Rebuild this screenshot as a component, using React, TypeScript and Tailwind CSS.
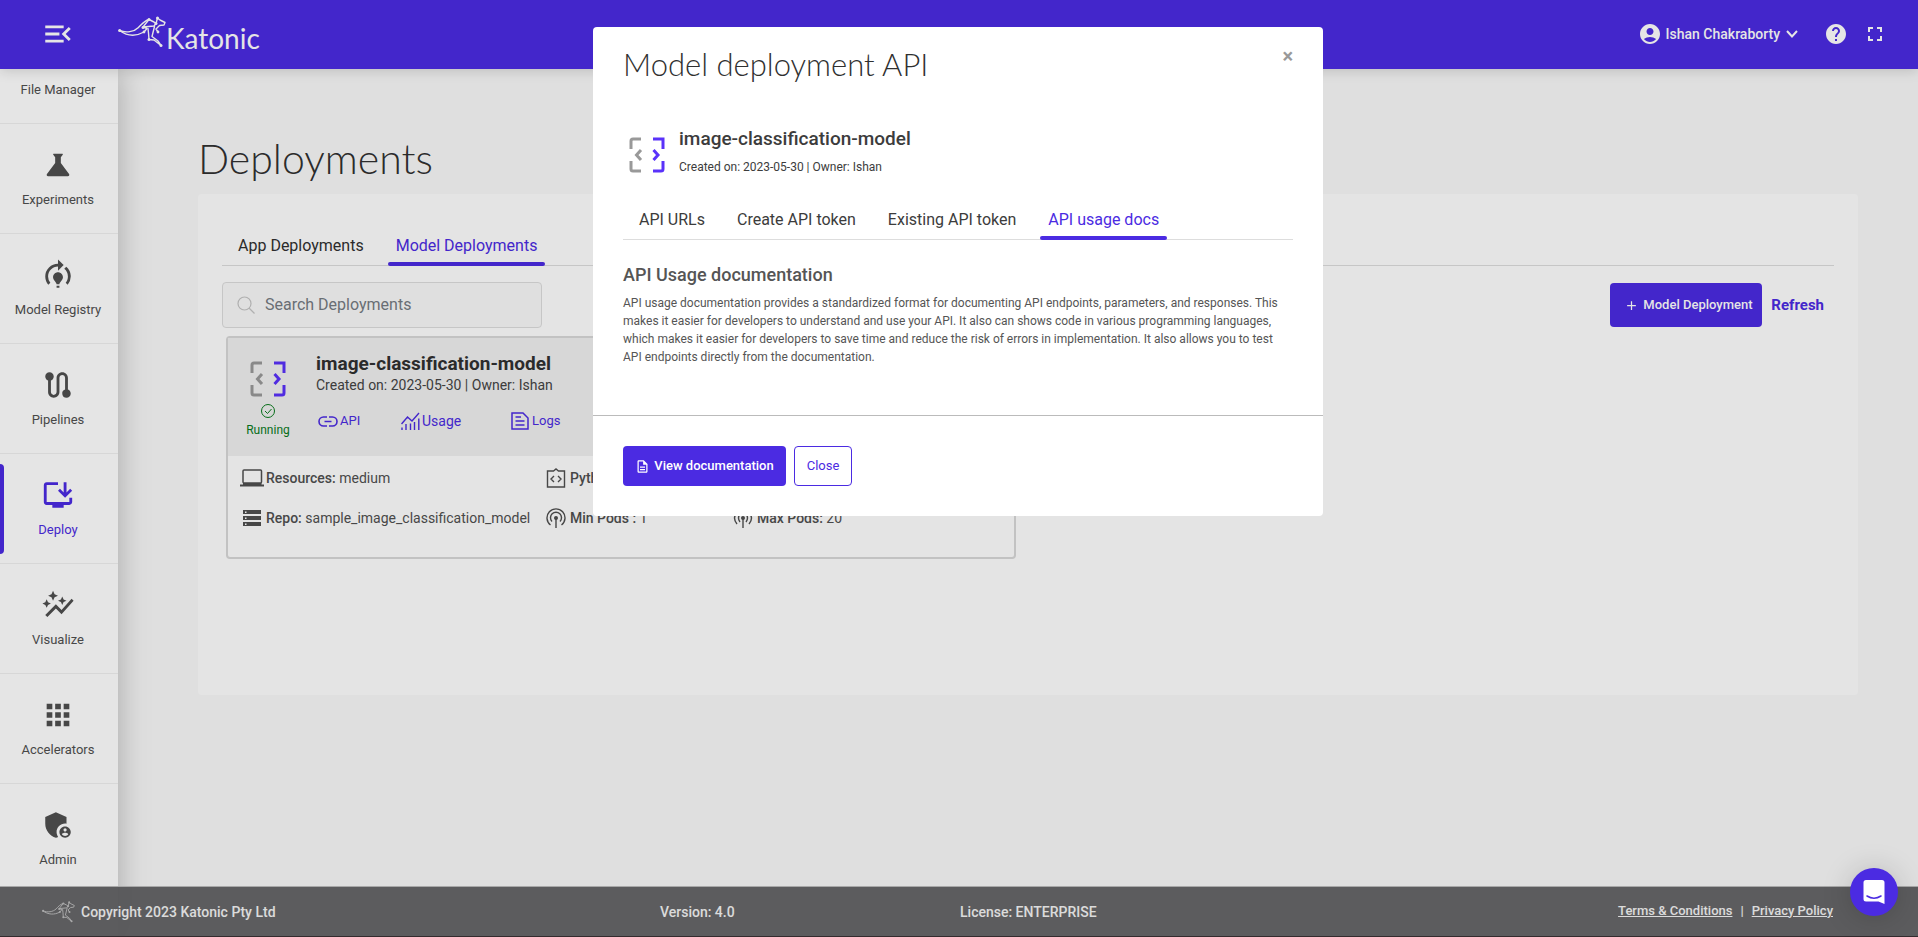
import React from "react";
import {
  MdMenuOpen,
  MdScience,
  MdModelTraining,
  MdRoute,
  MdInstallDesktop,
  MdAutoGraph,
  MdApps,
  MdAdminPanelSettings,
  MdAccountCircle,
  MdHelp,
  MdFullscreen,
  MdAdd,
  MdOutlineDescription,
} from "react-icons/md";

const navItems = [
  { label: "Experiments", icon: MdScience },
  { label: "Model Registry", icon: MdModelTraining },
  { label: "Pipelines", icon: MdRoute },
  { label: "Deploy", icon: MdInstallDesktop, active: true },
  { label: "Visualize", icon: MdAutoGraph },
  { label: "Accelerators", icon: MdApps },
  { label: "Admin", icon: MdAdminPanelSettings },
];

function Kangaroo({ className }: { className: string }) {
  return (
    <svg viewBox="0 0 48 32" className={className} fill="none" stroke="currentColor" strokeWidth="1.4" strokeLinecap="round" strokeLinejoin="round" aria-hidden="true">
      <path d="M1.5 14.5C8 17 16 16 20.5 11.5C24 8 26 5 31 3.5L36 6L38 7.5L39.5 2L42 4L47 6.5L46 9L41.5 9.5L38 13L40 16" />
      <path d="M1.5 14.5C9 20 18 20.5 26 16L29 12.5L25 11L36 10L38 7.5M31 3.5L25 11" />
      <path d="M30 12.5L30.5 17L31 23.5L36 24L43 29.5L40 25L34 20.5L36.5 10.5" />
      <g fill="currentColor" stroke="none">
        <circle cx="1.7" cy="14.5" r="1.6" />
        <circle cx="31" cy="3.5" r="1.5" />
        <circle cx="39.5" cy="2" r="1.5" />
        <circle cx="38" cy="7.5" r="1.5" />
        <circle cx="25" cy="11.5" r="1.5" />
        <circle cx="26" cy="16" r="1.4" />
        <circle cx="40" cy="16" r="1.4" />
        <circle cx="31" cy="23.5" r="1.5" />
        <circle cx="43" cy="29.5" r="1.5" />
      </g>
    </svg>
  );
}

function ModelIcon() {
  return (
    <svg viewBox="0 0 36 36" className="size-9 shrink-0" fill="none" strokeWidth="3" aria-hidden="true">
      <g stroke="#999">
        <path d="M12 2H4Q2 2 2 4V12M2 24V32Q2 34 4 34H12" />
        <path d="M12 13L7.5 18L12 23" />
      </g>
      <g stroke="#5a32fa">
        <path d="M24 2H34V12M34 24V32Q34 34 32 34H24" />
        <path d="M24.5 13L29 18L24.5 23" />
      </g>
    </svg>
  );
}

function LinkIcon() {
  return (
    <svg viewBox="0 0 20 11" className="h-[11px] w-5" fill="none" stroke="currentColor" strokeWidth="1.6" aria-hidden="true">
      <path d="M9 1H5.5a4.5 4.5 0 0 0 0 9H9M11 1h3.5a4.5 4.5 0 0 1 0 9H11M6.5 5.5h7" />
    </svg>
  );
}

function UsageIcon() {
  return (
    <svg viewBox="0 0 19 18" className="h-[18px] w-[19px]" fill="none" stroke="currentColor" strokeWidth="1.4" aria-hidden="true">
      <path d="M.5 12L6.5 5L11 9L18 1M1 15.5V18M5 12V18M9.5 11.5V18M13.5 10V18M17.8 6.5V18" />
    </svg>
  );
}

function LogsIcon() {
  return (
    <svg viewBox="0 0 18 18" className="size-[18px]" fill="none" stroke="currentColor" strokeWidth="1.5" aria-hidden="true">
      <path d="M1 1H12L17 6V17H1ZM4.5 5H10M4.5 9H13.5M4.5 13H13.5" />
    </svg>
  );
}

function LaptopIcon() {
  return (
    <svg viewBox="0 0 24 18" className="h-[18px] w-6" fill="none" stroke="currentColor" strokeWidth="1.5" aria-hidden="true">
      <rect x="3" y="1" width="18.5" height="13" rx="1" />
      <path d="M0 16.5H24M3 15H21.5" strokeWidth="2" />
    </svg>
  );
}

function ServerIcon() {
  return (
    <svg viewBox="0 0 24 18" className="h-[18px] w-6" fill="currentColor" aria-hidden="true">
      <path d="M3 1H21V5H3ZM3 7H21V11H3ZM3 13H21V17H3Z" />
      <path d="M5 2.5H6.5V4H5ZM5 8.5H6.5V10H5ZM5 14.5H6.5V16H5Z" fill="#fff" />
    </svg>
  );
}

function CodeBoxIcon() {
  return (
    <svg viewBox="0 0 20 20" className="size-5" fill="none" stroke="currentColor" strokeWidth="1.4" aria-hidden="true">
      <path d="M1.5 3H7.5L10 1L12.5 3H18.5V19H1.5ZM8 8L5 11L8 14M12 8L15 11L12 14" />
    </svg>
  );
}

function PodcastIcon() {
  return (
    <svg viewBox="0 0 20 20" className="size-5" fill="none" stroke="currentColor" strokeWidth="1.4" aria-hidden="true">
      <path d="M4.5 17A9 9 0 1 1 15.5 17M6 13.5A5.5 5.5 0 1 1 14 13.5M10 10V20" />
      <circle cx="10" cy="10" r="1.3" fill="currentColor" />
    </svg>
  );
}

function AntennaIcon() {
  return (
    <svg viewBox="0 0 20 20" className="size-5" fill="none" stroke="currentColor" strokeWidth="1.4" aria-hidden="true">
      <path d="M4 4Q-1 10 4 16M16 4Q21 10 16 16M7 6Q4 10 7 14M13 6Q16 10 13 14M10 10V20" />
      <circle cx="10" cy="10" r="1.3" fill="currentColor" />
    </svg>
  );
}

function Header() {
  return (
    <header className="relative z-20 flex h-[69px] shrink-0 items-center bg-[#4b2be2] pr-[31px] pb-0.5 pl-[41px] text-white shadow-[0_2px_12px_rgba(0,0,0,0.15)]">
      <button aria-label="Collapse menu">
        <MdMenuOpen className="size-[34px]" />
      </button>
      <a href="#" aria-label="Katonic" className="ml-[43px] flex h-9 items-end">
        <Kangaroo className="h-8 w-12 self-start" />
        <span className="pt-1 font-[Lato,sans-serif] text-[28px] leading-7">Katonic</span>
      </a>
      <div className="ml-auto flex items-center">
        <button className="flex items-center text-sm font-medium">
          <MdAccountCircle className="mr-1 size-6" />
          Ishan Chakraborty
          <svg viewBox="0 0 12 8" className="ml-1.5 h-2 w-3" fill="none" stroke="currentColor" strokeWidth="2" aria-hidden="true">
            <path d="M1 1L6 6.5L11 1" />
          </svg>
        </button>
        <button aria-label="Help" className="ml-[26px]">
          <MdHelp className="size-6" />
        </button>
        <button aria-label="Full screen" className="ml-[15px]">
          <MdFullscreen className="size-6" />
        </button>
      </div>
    </header>
  );
}

function Sidebar() {
  return (
    <nav className="z-10 flex w-[118px] shrink-0 flex-col overflow-hidden bg-white text-[13px] text-[#505050] shadow-[0_0_30px_rgba(0,0,0,0.25)]">
      <a href="#" className="flex h-[55px] shrink-0 justify-center border-b border-[#f0f0f0] pt-[11px] pr-0.5 leading-5">
        File Manager
      </a>
      {navItems.map(({ label, icon: Icon, active }) => (
        <a
          key={label}
          href="#"
          className={
            active
              ? "relative flex h-[110px] shrink-0 flex-col items-center border-b border-[#f0f0f0] pt-6 pr-0.5 leading-5 text-[#4b2be2]"
              : "relative flex h-[110px] shrink-0 flex-col items-center border-b border-[#f0f0f0] pt-6 pr-0.5 leading-5"
          }
        >
          {active && <span className="absolute top-[10px] left-0 h-[90px] w-1 rounded-r bg-[#4b2be2]" />}
          <Icon className="mb-2 size-[34px]" />
          {label}
        </a>
      ))}
    </nav>
  );
}

function DeploymentCard() {
  return (
    <article className="mt-2 ml-1 w-[790px] rounded border-2 border-[#d8d8d8] text-[#505050]">
      <div className="flex h-[118px] bg-[#f0f0f0]">
        <div className="flex w-20 flex-col items-center pt-[23px] text-xs text-[#087a1c]">
          <ModelIcon />
          <svg viewBox="0 0 14 14" className="mt-[7px] size-3.5" fill="none" stroke="currentColor" aria-hidden="true">
            <circle cx="7" cy="7" r="6.5" />
            <path d="M4 7L6.5 9.5L10.5 5" />
          </svg>
          <span className="mt-1 leading-4">Running</span>
        </div>
        <div className="ml-2 pt-3.5">
          <h2 className="text-[19px] leading-6 font-bold text-[#303030]">image-classification-model</h2>
          <p className="text-sm leading-[18px] text-[#444]">Created on: 2023-05-30 | Owner: Ishan</p>
          <div className="mt-[17px] flex items-center text-[#4b2be2]">
            <button className="flex w-[83px] items-center gap-0.5 pl-0.5 text-[13px]"><LinkIcon />API</button>
            <button className="flex w-28 items-center gap-0.5 pl-0.5 text-sm"><UsageIcon />Usage</button>
            <button className="flex items-center gap-[3px] text-[13px]"><LogsIcon />Logs</button>
          </div>
        </div>
      </div>
      <div className="grid h-[101px] grid-cols-[306px_187px_1fr] content-start gap-y-5 pt-3 pl-3 text-sm leading-5">
        <div className="flex items-center gap-0.5"><LaptopIcon /><span><b className="font-medium">Resources:</b> medium</span></div>
        <div className="flex items-center gap-1"><CodeBoxIcon /><span><b className="font-medium">Python:</b> 3.8</span></div>
        <div />
        <div className="flex items-center gap-0.5"><ServerIcon /><span><b className="font-medium">Repo:</b> sample_image_classification_model</span></div>
        <div className="flex items-center gap-1"><PodcastIcon /><span><b className="font-medium">Min Pods :</b> 1</span></div>
        <div className="flex items-center gap-1"><AntennaIcon /><span><b className="font-medium">Max Pods:</b> 20</span></div>
      </div>
    </article>
  );
}

function Deployments() {
  return (
    <main className="min-w-0 grow pt-[65px] pr-[60px] pl-20">
      <h1 className="font-[Lato,sans-serif] text-[41px] leading-[50px] font-light text-[#303030]">Deployments</h1>
      <section className="mt-2.5 h-[501px] rounded bg-[#fefefe] px-6 pt-8">
        <div role="tablist" className="flex h-10 border-b border-[#ddd] text-base">
          <button role="tab" aria-selected="false" className="mr-2 px-4 text-[#303030]">App Deployments</button>
          <button role="tab" aria-selected="true" className="relative px-2 text-[#4b2be2]">
            Model Deployments
            <span className="absolute inset-x-0 -bottom-px h-1 rounded-sm bg-[#4b2be2]" />
          </button>
        </div>
        <div className="mt-4 flex items-center justify-between">
          <label className="flex h-[46px] w-80 items-center rounded border border-[#ddd] bg-[#f9f9f9] px-3.5">
            <svg viewBox="0 0 18 18" className="mr-2.5 size-[18px]" fill="none" stroke="#c4c4c4" strokeWidth="1.2" aria-hidden="true">
              <circle cx="7.5" cy="7.5" r="6.5" />
              <path d="M12 12L17.5 17.5" />
            </svg>
            <input aria-label="Search Deployments" placeholder="Search Deployments" className="min-w-0 grow bg-transparent text-base outline-none placeholder:text-[#757b82]" />
          </label>
          <div className="flex items-center gap-[9px] pr-2.5">
            <button className="flex h-11 w-[152px] items-center rounded bg-[#4b2be2] pl-3.5 text-[13px] font-medium text-white">
              <MdAdd className="mr-1 size-[15px]" />
              Model Deployment
            </button>
            <button className="text-[15px] font-bold text-[#4b2be2]">Refresh</button>
          </div>
        </div>
        <DeploymentCard />
      </section>
    </main>
  );
}

function Footer() {
  return (
    <footer className="absolute inset-x-0 bottom-0 z-20 grid h-[51px] grid-cols-[660px_300px_1fr] items-center border-t border-b border-t-[#bbb] border-b-[#3a3034] bg-[#5f5f61]/95 text-sm font-medium text-[#f4f4f4]">
      <div className="flex items-center pl-[42px]">
        <Kangaroo className="mr-1.5 h-[22px] w-[33px] opacity-60" />
        Copyright 2023 Katonic Pty Ltd
      </div>
      <div>Version: 4.0</div>
      <div className="flex justify-between pr-[85px]">
        <span>License: ENTERPRISE</span>
        <span className="flex gap-2 text-[13px]">
          <a href="#" className="underline">Terms &amp; Conditions</a>
          <span>|</span>
          <a href="#" className="underline">Privacy Policy</a>
        </span>
      </div>
    </footer>
  );
}

function ApiDialog() {
  return (
    <div className="absolute inset-0 z-30 flex items-start justify-center bg-black/10 pt-[27px] pr-0.5">
      <div role="dialog" aria-modal="true" aria-labelledby="dialog-title" className="w-[730px] rounded-sm bg-white text-[#3c3c3c]">
        <div className="px-[30px]">
          <div className="flex items-start justify-between pt-[17px]">
            <h2 id="dialog-title" className="font-[Lato,sans-serif] text-[31px] leading-10 font-light text-[#303030]">Model deployment API</h2>
            <button aria-label="Close dialog" className="text-xl leading-6 font-bold text-[#999]">×</button>
          </div>
          <div className="mt-[41px] flex gap-3.5 pl-1.5">
            <div className="pt-3"><ModelIcon /></div>
            <div>
              <h3 className="text-[19px] leading-7 font-medium">image-classification-model</h3>
              <p className="mt-0.5 text-xs leading-6">Created on: 2023-05-30 | Owner: Ishan</p>
            </div>
          </div>
          <div role="tablist" className="mt-[21px] flex h-10 border-b border-[#ddd] text-base">
            <button role="tab" aria-selected="false" className="px-4">API URLs</button>
            <button role="tab" aria-selected="false" className="px-4">Create API token</button>
            <button role="tab" aria-selected="false" className="mr-2 px-4">Existing API token</button>
            <button role="tab" aria-selected="true" className="relative px-2 text-[#4b2be2]">
              API usage docs
              <span className="absolute inset-x-0 -bottom-px h-1 rounded-sm bg-[#4b2be2]" />
            </button>
          </div>
          <h3 className="mt-[21px] text-lg leading-7 font-medium text-[#555]">API Usage documentation</h3>
          <p className="mt-[5px] pb-[49px] text-xs leading-[18px] text-[#555]">
            API usage documentation provides a standardized format for documenting API endpoints, parameters, and responses. This
            makes it easier for developers to understand and use your API. It also can shows code in various programming languages,
            which makes it easier for developers to save time and reduce the risk of errors in implementation. It also allows you to test
            API endpoints directly from the documentation.
          </p>
        </div>
        <div className="flex gap-2 border-t border-[#bbb] px-[30px] py-[30px] text-[13px]">
          <button className="flex h-10 w-[163px] items-center justify-center rounded bg-[#4b2be2] font-medium text-white">
            <MdOutlineDescription className="mr-1 size-[15px]" />
            View documentation
          </button>
          <button className="h-10 w-[58px] rounded border border-[#4b2be2] text-[#4b2be2]">Close</button>
        </div>
      </div>
    </div>
  );
}

export default function App() {
  return (
    <div className="relative flex h-screen flex-col overflow-hidden bg-[#f9f9f9] font-[Roboto,sans-serif]">
      <Header />
      <div className="flex min-h-0 grow">
        <Sidebar />
        <Deployments />
      </div>
      <Footer />
      <ApiDialog />
      <button aria-label="Open chat" className="absolute right-5 bottom-[21px] z-40 flex size-12 items-center justify-center rounded-full bg-[#4b2be2] shadow-[0_2px_30px_rgba(0,0,0,0.18)]">
        <svg viewBox="0 0 24 26" className="h-[26px] w-6" aria-hidden="true">
          <path d="M4 1H20Q22.5 1 22.5 3.5V25L16.5 22.5H4Q1.5 22.5 1.5 20V3.5Q1.5 1 4 1Z" fill="#fff" />
          <path d="M5 17Q12 21.5 19 17" fill="none" stroke="#4b2be2" strokeWidth="1.5" strokeLinecap="round" />
        </svg>
      </button>
    </div>
  );
}
